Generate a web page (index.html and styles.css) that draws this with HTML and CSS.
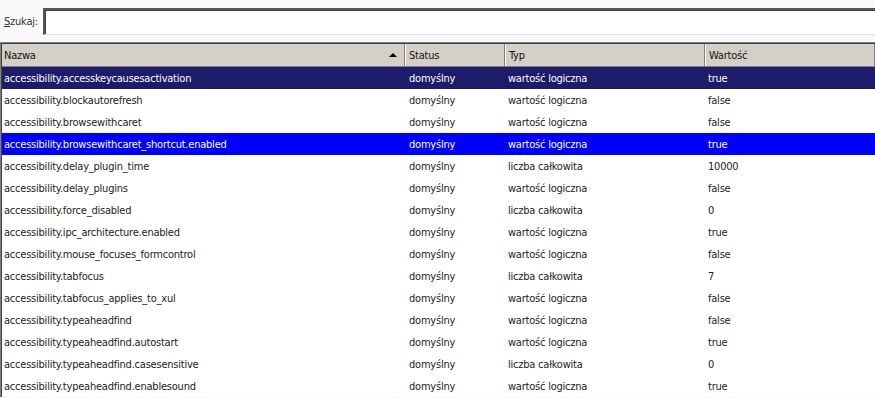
FILE: index.html
```html
<!DOCTYPE html>
<html lang="pl">
<head>
<meta charset="utf-8">
<title>about:config</title>
<link rel="stylesheet" href="styles.css">
</head>
<body>
<div class="search">
  <label class="search-label"><u>S</u>zukaj:</label>
  <div class="search-input"></div>
</div>
<div class="tree">
  <div class="head">
    <div class="hc c1"><span>Nazwa</span><span class="sort"></span></div>
    <div class="hc c2">Status</div>
    <div class="hc c3">Typ</div>
    <div class="hc c4">Wartość</div>
  </div>
  <div class="rows">
    <div class="row sel-dark"><div class="c1">accessibility.accesskeycausesactivation</div><div class="c2">domyślny</div><div class="c3">wartość logiczna</div><div class="c4">true</div></div>
    <div class="row"><div class="c1">accessibility.blockautorefresh</div><div class="c2">domyślny</div><div class="c3">wartość logiczna</div><div class="c4">false</div></div>
    <div class="row"><div class="c1">accessibility.browsewithcaret</div><div class="c2">domyślny</div><div class="c3">wartość logiczna</div><div class="c4">false</div></div>
    <div class="row sel-blue"><div class="c1">accessibility.browsewithcaret_shortcut.enabled</div><div class="c2">domyślny</div><div class="c3">wartość logiczna</div><div class="c4">true</div></div>
    <div class="row"><div class="c1">accessibility.delay_plugin_time</div><div class="c2">domyślny</div><div class="c3">liczba całkowita</div><div class="c4">10000</div></div>
    <div class="row"><div class="c1">accessibility.delay_plugins</div><div class="c2">domyślny</div><div class="c3">wartość logiczna</div><div class="c4">false</div></div>
    <div class="row"><div class="c1">accessibility.force_disabled</div><div class="c2">domyślny</div><div class="c3">liczba całkowita</div><div class="c4">0</div></div>
    <div class="row"><div class="c1">accessibility.ipc_architecture.enabled</div><div class="c2">domyślny</div><div class="c3">wartość logiczna</div><div class="c4">true</div></div>
    <div class="row"><div class="c1">accessibility.mouse_focuses_formcontrol</div><div class="c2">domyślny</div><div class="c3">wartość logiczna</div><div class="c4">false</div></div>
    <div class="row"><div class="c1">accessibility.tabfocus</div><div class="c2">domyślny</div><div class="c3">liczba całkowita</div><div class="c4">7</div></div>
    <div class="row"><div class="c1">accessibility.tabfocus_applies_to_xul</div><div class="c2">domyślny</div><div class="c3">wartość logiczna</div><div class="c4">false</div></div>
    <div class="row"><div class="c1">accessibility.typeaheadfind</div><div class="c2">domyślny</div><div class="c3">wartość logiczna</div><div class="c4">false</div></div>
    <div class="row"><div class="c1">accessibility.typeaheadfind.autostart</div><div class="c2">domyślny</div><div class="c3">wartość logiczna</div><div class="c4">true</div></div>
    <div class="row"><div class="c1">accessibility.typeaheadfind.casesensitive</div><div class="c2">domyślny</div><div class="c3">liczba całkowita</div><div class="c4">0</div></div>
    <div class="row"><div class="c1">accessibility.typeaheadfind.enablesound</div><div class="c2">domyślny</div><div class="c3">wartość logiczna</div><div class="c4">true</div></div>
  </div>
</div>
</body>
</html>
```
FILE: styles.css
```css
html, body {
  margin: 0;
  padding: 0;
  background: #f9f9f9;
  font-family: "DejaVu Sans Condensed", "DejaVu Sans", sans-serif;
  font-size: 11px;
  letter-spacing: -0.22px;
  color: #222;
  overflow: hidden;
}
.search {
  display: flex;
  align-items: center;
  height: 42px;
  padding-left: 4px;
}
.search-label {
  width: 39px;
  color: #333;
}
.search-label u {
  text-decoration: underline;
}
.search-input {
  flex: 1;
  height: 24px;
  background: #fff;
  border-top: 2px solid #555;
  border-left: 2px solid #555;
  border-bottom: 1px solid #e0e0e0;
  border-right: 0;
  box-shadow: inset 1px 1px 0 #404040;
  margin-top: 1px;
}
.tree {
  border-top: 1px solid #808080;
  border-left: 1px solid #808080;
  background: #fff;
  box-shadow: inset 1px 1px 0 #404040;
  padding: 1px 0 0 1px;
}
.head {
  display: flex;
  height: 22px;
  background: #d4d0c8;
  border-bottom: 1px solid #808080;
}
.hc {
  display: flex;
  align-items: center;
  box-sizing: border-box;
  padding-left: 3px;
  border-left: 1px solid #fff;
  border-right: 1px solid #808080;
  color: #111;
}
.head .c1 { border-left: 0; padding-left: 2px; }
.c1 { width: 403px; }
.c2 { width: 100px; }
.c3 { width: 200px; }
.c4 { flex: 1; }
.head .c1 {
  justify-content: space-between;
  padding-right: 7px;
}
.sort {
  width: 0;
  height: 0;
  border-left: 4px solid transparent;
  border-right: 4px solid transparent;
  border-bottom: 4px solid #000;
}
.row {
  display: flex;
  height: 22px;
  align-items: center;
  white-space: nowrap;
}
.row > div {
  box-sizing: border-box;
  padding-left: 3px;
  overflow: hidden;
}
.row .c1 { padding-left: 2px; }
.row .c2 { padding-left: 4px; }
.sel-dark {
  background: #1c1c6a;
  color: #fff;
}
.sel-blue {
  background: #0000ff;
  color: #fff;
}
```
